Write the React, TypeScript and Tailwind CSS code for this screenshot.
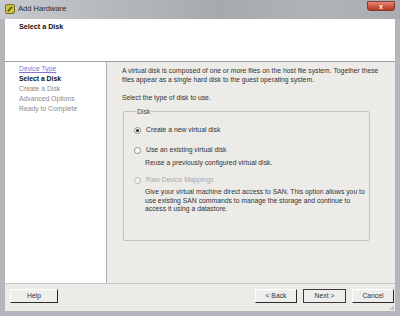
import React from "react";

const font = { fontFamily: '"Liberation Sans", Arial, sans-serif' };

function Radio({ checked, disabled }: { checked?: boolean; disabled?: boolean }) {
  return (
    <span
      className={`relative inline-flex h-[7px] w-[7px] shrink-0 items-center justify-center rounded-full border ${
        disabled ? "border-[#b8b8b8] bg-[#f4f4f2]" : "border-[#8a8a8a] bg-white"
      }`}
    >
      {checked && <span className="h-[3px] w-[3px] rounded-full bg-[#222]" />}
    </span>
  );
}

function Btn({ children, def, className = "" }: { children: React.ReactNode; def?: boolean; className?: string }) {
  return (
    <div
      className={`flex h-[14px] items-center justify-center bg-[#eeeeec] text-[6.8px] text-[#333] ${
        def
          ? "border border-[#3a3a3a]"
          : "border border-t-[#ffffff] border-l-[#ffffff] border-r-[#2a2a2a] border-b-[#2a2a2a]"
      } ${className}`}
    >
      {children}
    </div>
  );
}

export default function App() {
  return (
    <div
      className="flex h-[316px] w-[400px] flex-col overflow-hidden bg-[#b3b7bc]"
      style={font}
    >
      {/* Title bar */}
      <div className="flex h-[19px] shrink-0 items-start bg-[linear-gradient(90deg,#c6c9cd_0%,#b4b7bb_30%,#a6a9ae_55%,#b0b3b8_80%,#a9adb2_100%)]">
        <div className="ml-[5px] mt-[4px] h-[10px] w-[10px]">
          <svg viewBox="0 0 10 10" width="10" height="10">
            <rect x="0.5" y="0.5" width="9" height="9" rx="1.5" fill="#c9c23a" stroke="#5c5a1a" strokeWidth="0.8" />
            <path d="M2.5 7.5 L7 3" stroke="#3a3a1a" strokeWidth="1.3" />
            <path d="M2 8 L2.6 6.8 L3.2 7.4 Z" fill="#fff" />
          </svg>
        </div>
        <div className="ml-[3px] mt-[4px] text-[7.6px] leading-[10px] text-[#2a2a2a]">Add Hardware</div>
        <div className="ml-auto mr-[5px] mt-[1px] flex h-[10px] w-[28px] items-center justify-center rounded-b-[3px] border border-[#8c3a2e] bg-[linear-gradient(180deg,#e58a78_0%,#d05a45_50%,#b8382a_100%)] text-[7px] font-bold leading-none text-white">
          x
        </div>
      </div>

      {/* Body */}
      <div className="mx-[5px] flex flex-1 flex-col">
        {/* Header */}
        <div className="h-[43px] shrink-0 border-b border-[#a0a0a0] bg-white pl-[14px] pt-[3px]">
          <div className="text-[7.2px] font-bold leading-[9px] text-[#111]">Select a Disk</div>
        </div>

        {/* Middle */}
        <div className="flex h-[221px] shrink-0">
          <div className="w-[102px] shrink-0 border-r border-[#b0b0b0] bg-white pl-[14px] pt-[2px] text-[6.8px] leading-[10px]">
            <div className="text-[#8a6fd8] underline">Device Type</div>
            <div className="font-bold text-[#111]">Select a Disk</div>
            <div className="text-[#8a8a8a]">Create a Disk</div>
            <div className="text-[#8a8a8a]">Advanced Options</div>
            <div className="text-[#8a8a8a]">Ready to Complete</div>
          </div>
          <div className="flex-1 bg-[#ecebe8] pl-[15px] pr-[16px] pt-[5px] text-[6.8px] leading-[8.5px] text-[#333]">
            <div>
              A virtual disk is composed of one or more files on the host file system. Together these
              <br />
              files appear as a single hard disk to the guest operating system.
            </div>
            <div className="mt-[10px]">Select the type of disk to use.</div>
            <fieldset className="mr-[9px] mt-[5px] ml-[1px] h-[133px] rounded-[2px] border border-[#c2c2c2] pl-[10px]">
              <legend className="ml-[2px] px-[1px] text-[#444]">Disk</legend>
              <div className="mt-[10px] flex items-center gap-[5px]">
                <Radio checked />
                <span>Create a new virtual disk</span>
              </div>
              <div className="mt-[11.5px] flex items-center gap-[5px]">
                <Radio />
                <span>Use an existing virtual disk</span>
              </div>
              <div className="mt-[4.5px] pl-[11px]">Reuse a previously configured virtual disk.</div>
              <div className="mt-[8.5px] flex items-center gap-[5px]">
                <Radio disabled />
                <span className="text-[#a8a8a8]">Raw Device Mappings</span>
              </div>
              <div className="mt-[3.5px] pl-[11px]">
                Give your virtual machine direct access to SAN. This option allows you to
                <br />
                use existing SAN commands to manage the storage and continue to
                <br />
                access it using a datastore.
              </div>
            </fieldset>
          </div>
        </div>

        {/* Footer */}
        <div className="relative flex h-[28px] shrink-0 items-start border-t border-[#c8c8c8] bg-[#ecebe8] pt-[5px]">
          <Btn className="ml-[5px] w-[48px]">Help</Btn>
          <Btn className="ml-auto w-[42px]">&lt; Back</Btn>
          <Btn def className="ml-[6px] w-[43px]">Next &gt;</Btn>
          <Btn className="ml-[6px] mr-[1px] w-[42px]">Cancel</Btn>
          <svg className="absolute bottom-[0px] right-[0px]" width="6" height="6" viewBox="0 0 6 6">
            <path d="M5 1 L1 5 M5 3 L3 5" stroke="#8a8a8a" strokeWidth="0.8" />
          </svg>
        </div>
      </div>
      <div className="h-[5px] shrink-0" />
    </div>
  );
}
